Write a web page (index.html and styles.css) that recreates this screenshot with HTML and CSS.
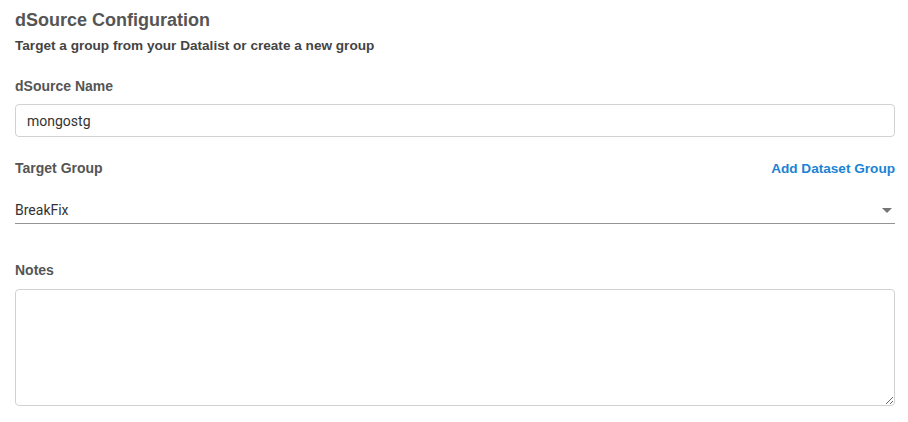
FILE: index.html
```html
<!DOCTYPE html>
<html>
<head>
<meta charset="utf-8">
<link rel="stylesheet" href="styles.css">
</head>
<body>
<div class="form">
  <h2 class="title">dSource Configuration</h2>
  <p class="subtitle">Target a group from your Datalist or create a new group</p>

  <div class="field">
    <label class="label">dSource Name</label>
    <input class="text-input" type="text" value="mongostg">
  </div>

  <div class="field">
    <div class="label-row">
      <label class="label">Target Group</label>
      <a class="link" href="#">Add Dataset Group</a>
    </div>
    <div class="select">
      <span class="select-value">BreakFix</span>
      <span class="caret"></span>
    </div>
  </div>

  <div class="field notes">
    <label class="label">Notes</label>
    <textarea class="textarea"></textarea>
  </div>
</div>
</body>
</html>
```

FILE: styles.css
```css
* { box-sizing: border-box; }
html, body { margin: 0; padding: 0; background: #fff; }
body { font-family: "Liberation Sans", Arial, sans-serif; }

.form {
  padding: 9px 13px 0 15px;
  display: flex;
  flex-direction: column;
}

.title {
  margin: 0;
  font-size: 18px;
  font-weight: bold;
  color: #555;
  line-height: 22px;
}

.subtitle {
  margin: 7px 0 0;
  font-size: 13.6px;
  font-weight: bold;
  color: #444;
  line-height: 16px;
}

.field {
  display: flex;
  flex-direction: column;
}

.field:nth-of-type(1) { margin-top: 24px; }

.label {
  font-size: 14px;
  font-weight: bold;
  color: #555;
  line-height: 16px;
}

.text-input {
  margin-top: 10px;
  height: 33px;
  border: 1px solid #d2d2d2;
  border-radius: 4px;
  padding: 0 11px;
  font-family: Roboto, sans-serif;
  font-size: 14px;
  color: #333;
  outline: none;
}

.label-row {
  margin-top: 23px;
  display: flex;
  justify-content: space-between;
  align-items: center;
}

.link {
  color: #1a83d4;
  font-size: 13.6px;
  font-weight: bold;
  text-decoration: none;
}

.select {
  margin-top: 26px;
  display: flex;
  align-items: center;
  justify-content: space-between;
  height: 22px;
  border-bottom: 1px solid #949494;
  padding-bottom: 5px;
}

.select-value {
  font-family: Roboto, sans-serif;
  font-size: 14px;
  color: #333;
}

.caret {
  width: 0;
  height: 0;
  border-left: 5px solid transparent;
  border-right: 5px solid transparent;
  border-top: 5px solid #757575;
  margin-right: 3px;
}

.notes { margin-top: 38px; }

.textarea {
  margin-top: 11px;
  height: 117px;
  border: 1px solid #d2d2d2;
  border-radius: 4px;
  resize: vertical;
  font-family: Roboto, sans-serif;
  font-size: 14px;
}
```
